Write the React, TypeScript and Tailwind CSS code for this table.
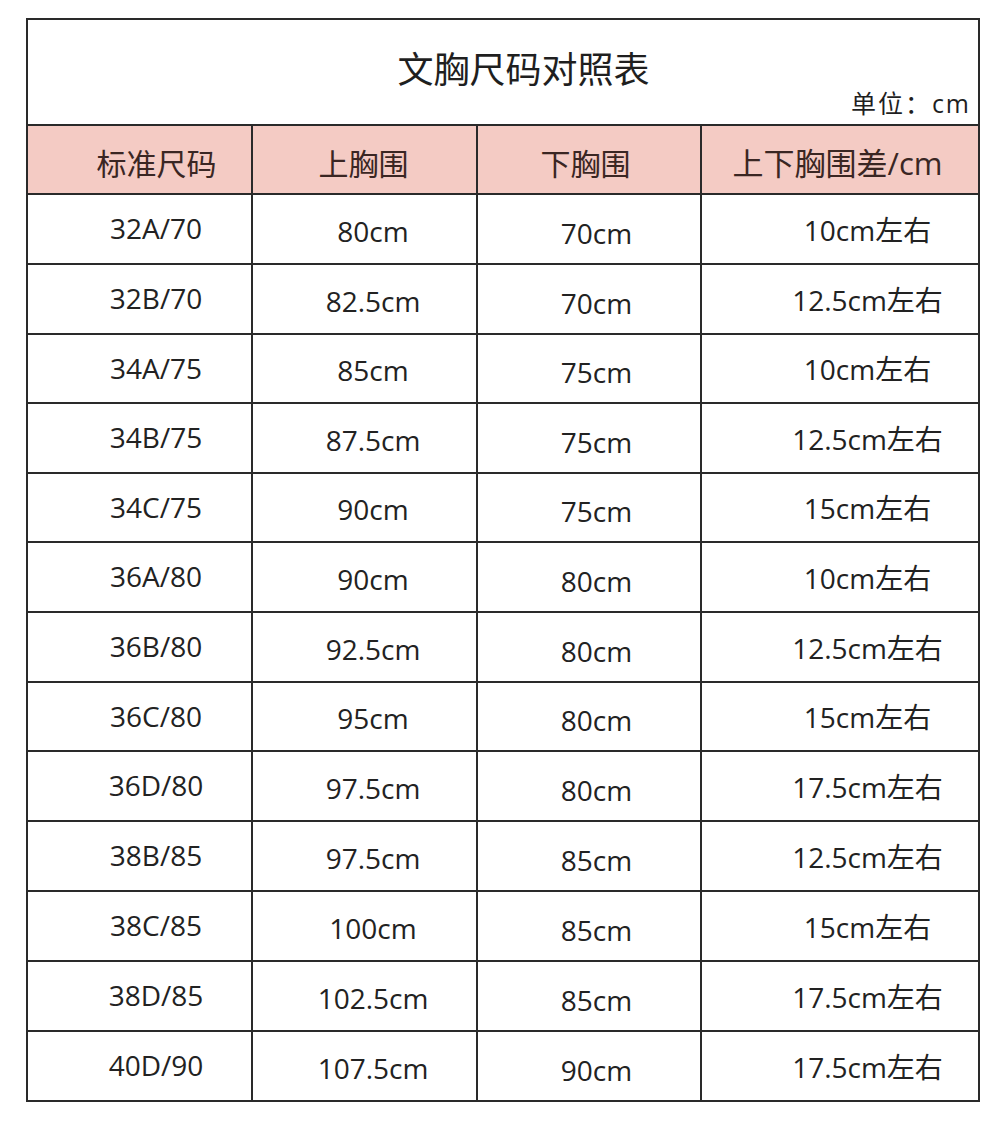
import React from 'react'

type Row = {
  size: string
  upper: string
  lower: string
  diff: string
}

const rows: Row[] = [
  { size: '32A/70', upper: '80cm', lower: '70cm', diff: '10cm左右' },
  { size: '32B/70', upper: '82.5cm', lower: '70cm', diff: '12.5cm左右' },
  { size: '34A/75', upper: '85cm', lower: '75cm', diff: '10cm左右' },
  { size: '34B/75', upper: '87.5cm', lower: '75cm', diff: '12.5cm左右' },
  { size: '34C/75', upper: '90cm', lower: '75cm', diff: '15cm左右' },
  { size: '36A/80', upper: '90cm', lower: '80cm', diff: '10cm左右' },
  { size: '36B/80', upper: '92.5cm', lower: '80cm', diff: '12.5cm左右' },
  { size: '36C/80', upper: '95cm', lower: '80cm', diff: '15cm左右' },
  { size: '36D/80', upper: '97.5cm', lower: '80cm', diff: '17.5cm左右' },
  { size: '38B/85', upper: '97.5cm', lower: '85cm', diff: '12.5cm左右' },
  { size: '38C/85', upper: '100cm', lower: '85cm', diff: '15cm左右' },
  { size: '38D/85', upper: '102.5cm', lower: '85cm', diff: '17.5cm左右' },
  { size: '40D/90', upper: '107.5cm', lower: '90cm', diff: '17.5cm左右' }
]

const font = "font-['Open_Sans','Noto_Sans_CJK_SC',sans-serif]"

export default function App() {
  return (
    <div className={`min-h-[1127px] w-[998px] bg-white pt-[18px] ${font}`}>
      <div className="ml-[26px] w-[954px] border-2 border-[#2a2a2a]">
        {/* title */}
        <div className="flex h-[104px] flex-col">
          <div className="mt-[30px] h-[40px] pl-[41px] text-center text-[36px] leading-[40px] text-[#1f1f1f]">
            文胸尺码对照表
          </div>
          <div className="h-[26px] pr-[7px] text-right text-[25px] leading-[26px] tracking-[2px] text-[#1f1f1f]">
            单位：cm
          </div>
        </div>

        {/* header */}
        <div className="grid h-[69px] grid-cols-[223px_225px_224px_278px] border-t-2 border-[#2a2a2a] bg-[#f4cbc4] text-[30px] text-[#3a2623]">
          <div className="flex items-center justify-center pl-[34px] pt-[8px]">标准尺码</div>
          <div className="flex items-center justify-center border-l-2 border-[#2a2a2a] pr-[2px] pt-[8px]">上胸围</div>
          <div className="flex items-center justify-center border-l-2 border-[#2a2a2a] pr-[7px] pt-[8px]">下胸围</div>
          <div className="flex items-center justify-center border-l-2 border-[#2a2a2a] pr-[5px] pt-[8px] text-[31px]">上下胸围差/cm</div>
        </div>

        {/* body */}
        {rows.map((r, i) => (
          <div
            key={r.size}
            className={`grid grid-cols-[223px_225px_224px_278px] border-t-2 border-[#2a2a2a] text-[28px] text-[#222] ${
              i === 2 || i === 4 || i === 7 ? 'h-[69px]' : 'h-[70px]'
            }`}
          >
            <div className="flex items-center justify-center pb-[2px] pl-[33px]">{r.size}</div>
            <div className="flex items-center justify-center border-l-2 border-[#2a2a2a] pl-[17px] pt-[3px]">{r.upper}</div>
            <div className="flex items-center justify-center border-l-2 border-[#2a2a2a] pl-[15px] pt-[7px]">{r.lower}</div>
            <div className="flex items-center justify-center border-l-2 border-[#2a2a2a] pl-[55px] pt-[1px]">{r.diff}</div>
          </div>
        ))}
      </div>
    </div>
  )
}
